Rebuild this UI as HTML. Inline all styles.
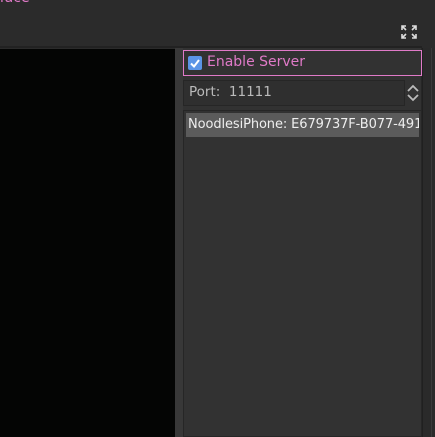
<!DOCTYPE html><html><head><style>
body{margin:0;width:435px;height:437px;background:#2b2b2b;position:relative;overflow:hidden;font-family:"DejaVu Sans","Liberation Sans",sans-serif;}
div{position:absolute;box-sizing:border-box}
</style></head><body>
<div style="left:-6px;top:-10px;color:#e07ac8;font-size:14px;line-height:16px">rface</div>
<div style="left:0;top:46px;width:422px;height:2px;background:#222"></div>
<svg style="position:absolute;left:401px;top:25px" width="16" height="14" viewBox="0 0 16 14" fill="none" stroke="#ddd" stroke-width="1.6"><path d="M1 5V1h4M1 1l4 4M15 5V1h-4M15 1l-4 4M1 9v4h4M1 13l4-4M15 9v4h-4M15 13l-4-4"/></svg>
<div style="left:0;top:49px;width:175px;height:388px;background:#040504"></div>
<div style="left:175px;top:48px;width:8px;height:389px;background:#383838"></div>
<div style="left:183px;top:48px;width:239px;height:389px;background:#323232;border-right:1px solid #262626"></div>
<div style="left:422px;top:48px;width:13px;height:389px;background:#2a2a2a;border-left:1px solid #202020"></div>
<div style="left:431px;top:48px;width:1px;height:389px;background:#3a3a3a"></div>
<div style="left:183px;top:50px;width:239px;height:26px;border:1.5px solid #e07ac8"></div>
<div style="left:188px;top:56px;width:14px;height:14px;background:#5b94e6;border-radius:2px"></div>
<svg style="position:absolute;left:188px;top:56px" width="14" height="14"><path d="M3 7.5l3 3 5-6.5" stroke="#fff" stroke-width="2" fill="none"/></svg>
<div style="left:207px;top:54px;color:#e07ac8;font-size:14px;line-height:17px">Enable Server</div>
<div style="left:183px;top:80px;width:222px;height:26px;background:#2f2f2f;border:1px solid #262626"></div>
<div style="left:189px;top:84px;color:#bbb;font-size:13.5px;line-height:17px">Port:&nbsp; 11111</div>
<svg style="position:absolute;left:406px;top:84px" width="14" height="18" fill="none" stroke="#bbb" stroke-width="1.8"><path d="M2 7l5-5 5 5M2 11l5 5 5-5"/></svg>
<div style="left:183px;top:110px;width:239px;height:327px;border:1px solid #262626;border-right:none"></div>
<div style="left:186px;top:113px;width:233px;height:24px;background:#5b5b5b"></div>
<div style="left:188px;top:116px;color:#eee;font-size:13px;line-height:17px;white-space:nowrap;width:231px;overflow:hidden;letter-spacing:-0.1px">NoodlesiPhone: E679737F-B077-491</div>
</body></html>
